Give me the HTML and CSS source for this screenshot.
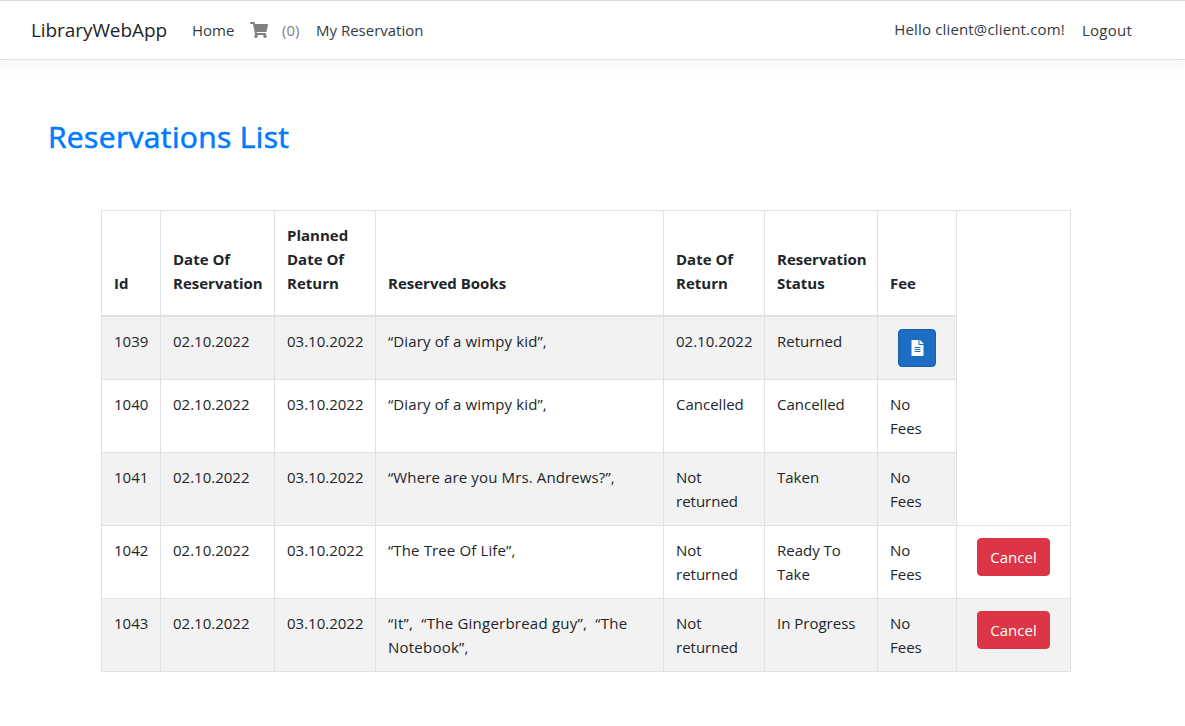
FILE: index.html
```html
<!DOCTYPE html>
<html lang="en">
<head>
<meta charset="utf-8">
<title>Reservations List - LibraryWebApp</title>
<link rel="stylesheet" href="styles.css">
</head>
<body>
<header class="navbar">
  <a class="brand">LibraryWebApp</a>
  <a class="nav-home">Home</a>
  <a class="nav-cart">
    <svg class="cart-icon" viewBox="0 0 576 512"><path fill="currentColor" d="M528.12 301.319l47.273-208C578.806 78.301 567.391 64 551.99 64H159.208l-9.166-44.81C147.758 8.021 137.93 0 126.529 0H24C10.745 0 0 10.745 0 24v16c0 13.255 10.745 24 24 24h69.883l70.248 343.435C147.325 417.1 136 435.222 136 456c0 30.928 25.072 56 56 56s56-25.072 56-56c0-15.674-6.447-29.835-16.824-40h209.647C430.447 426.165 424 440.326 424 456c0 30.928 25.072 56 56 56s56-25.072 56-56c0-22.172-12.888-41.332-31.579-50.405l5.517-24.276c3.413-15.018-8.002-29.319-23.403-29.319H218.117l-6.545-32h293.145c11.206 0 20.92-7.754 23.403-18.681z"/></svg>
    <span class="cart-count">(0)</span>
  </a>
  <a class="nav-reservation">My Reservation</a>
  <span class="greeting">Hello client@client.com!</span>
  <a class="logout">Logout</a>
</header>
<main>
  <h1 class="title">Reservations List</h1>
  <table class="reservations">
    <colgroup><col class="c-id"><col class="c-date"><col class="c-planned"><col class="c-books"><col class="c-returned"><col class="c-status"><col class="c-fee"><col class="c-action"></colgroup>
    <tbody>
      <tr class="head"><th>Id</th><th>Date Of<br>Reservation</th><th>Planned<br>Date Of<br>Return</th><th>Reserved Books</th><th>Date Of<br>Return</th><th>Reservation<br>Status</th><th>Fee</th><td rowspan="4" class="blank"></td></tr>
      <tr class="striped first"><td>1039</td><td>02.10.2022</td><td>03.10.2022</td><td class="books">“Diary of a wimpy kid”,</td><td>02.10.2022</td><td>Returned</td><td class="fee-cell"><button class="btn btn-fee" aria-label="Fee details"><svg class="file-icon" viewBox="0 0 384 512"><path fill="currentColor" d="M224 136V0H24C10.700 0 0 10.700 0 24v464c0 13.300 10.700 24 24 24h336c13.300 0 24-10.700 24-24V160H248c-13.200 0-24-10.800-24-24zm64 236c0 6.600-5.400 12-12 12H108c-6.600 0-12-5.400-12-12v-8c0-6.600 5.400-12 12-12h168c6.600 0 12 5.400 12 12v8zm0-64c0 6.600-5.400 12-12 12H108c-6.600 0-12-5.400-12-12v-8c0-6.600 5.400-12 12-12h168c6.600 0 12 5.400 12 12v8zm0-72v8c0 6.600-5.400 12-12 12H108c-6.600 0-12-5.400-12-12v-8c0-6.600 5.400-12 12-12h168c6.600 0 12 5.400 12 12zm96-114.100v6.100H256V0h6.100c6.400 0 12.500 2.500 17 7l97.900 98c4.500 4.500 7 10.600 7 16.900z"/></svg></button></td></tr>
      <tr><td>1040</td><td>02.10.2022</td><td>03.10.2022</td><td class="books">“Diary of a wimpy kid”,</td><td>Cancelled</td><td>Cancelled</td><td>No<br>Fees</td></tr>
      <tr class="striped"><td>1041</td><td>02.10.2022</td><td>03.10.2022</td><td class="books">“Where are you Mrs. Andrews?”,</td><td>Not<br>returned</td><td>Taken</td><td>No<br>Fees</td></tr>
      <tr><td>1042</td><td>02.10.2022</td><td>03.10.2022</td><td class="books">“The Tree Of Life”,</td><td>Not<br>returned</td><td>Ready To<br>Take</td><td>No<br>Fees</td><td class="action-cell"><button class="btn btn-cancel">Cancel</button></td></tr>
      <tr class="striped"><td>1043</td><td>02.10.2022</td><td>03.10.2022</td><td class="books books-many">“It”,&nbsp; “The Gingerbread guy”,&nbsp; “The<br>Notebook”,</td><td>Not<br>returned</td><td>In Progress</td><td>No<br>Fees</td><td class="action-cell"><button class="btn btn-cancel">Cancel</button></td></tr>
    </tbody>
  </table>
</main>
</body>
</html>
```
FILE: styles.css
```css
* { box-sizing: border-box; }
body {
  margin: 0;
  background: #fff;
  color: #212529;
  font: 400 15px/24px "Open Sans", "Noto Sans", sans-serif;
}
.navbar {
  display: flex;
  align-items: center;
  height: 60px;
  padding: 0 53px 1px 31px;
  border-top: 1px solid #d9d9d9;
  border-bottom: 1px solid #dee2e6;
  box-shadow: 0 4px 12px rgba(0, 0, 0, .05);
  color: #343a40;
  white-space: nowrap;
}
.brand { width: 161px; font-size: 19px; letter-spacing: -.08px; color: #212529; }
.nav-home { width: 58px; }
.nav-cart { display: flex; align-items: center; width: 66px; color: #808080; }
.cart-icon { width: 18px; height: 16px; margin: 0 14px 0 0; }
.greeting { margin-left: auto; margin-right: 17px; padding-bottom: 2px; letter-spacing: .16px; }
.logout { letter-spacing: .25px; }
.title {
  margin: 58px 0 0 48px;
  font-size: 30px;
  line-height: 38px;
  font-weight: 500;
  letter-spacing: .35px;
  -webkit-text-stroke: .6px #007bff;
  color: #007bff;
}
.reservations {
  width: 970px;
  margin: 54px 0 0 101px;
  table-layout: fixed;
  border-collapse: separate;
  border-spacing: 0;
  border-top: 1px solid #dee2e6;
  border-left: 1px solid #dee2e6;
}
.c-id { width: 59px; }
.c-date { width: 114px; }
.c-planned { width: 101px; }
.c-books { width: 288px; }
.c-returned { width: 101px; }
.c-status { width: 113px; }
.c-fee { width: 79px; }
.c-action { width: 114px; }
.reservations td, .reservations th {
  height: 73px;
  padding: 12px 0 12px 12px;
  border-right: 1px solid #dee2e6;
  border-bottom: 1px solid #dee2e6;
  vertical-align: top;
  text-align: left;
  white-space: nowrap;
}
.reservations th {
  height: 106px;
  padding-bottom: 20px;
  border-bottom-width: 2px;
  vertical-align: bottom;
  font-weight: 700;
}
.reservations .first td { height: 63px; padding-bottom: 0; }
.striped td { background: #f2f2f2; }
.books { letter-spacing: .13px; }
.books-many { letter-spacing: .23px; }
.btn {
  display: block;
  height: 38px;
  padding: 0;
  border: 1px solid;
  border-radius: 4px;
  color: #fff;
  font: inherit;
}
.reservations .fee-cell, .reservations .action-cell { padding-left: 20px; }
.btn-fee { width: 38px; background: #1b6ec2; border-color: #1861ac; }
.file-icon { display: block; width: 13px; height: 16px; margin: 0 auto; }
.btn-cancel { width: 73px; background: #dc3545; border-color: #dc3545; }
```
